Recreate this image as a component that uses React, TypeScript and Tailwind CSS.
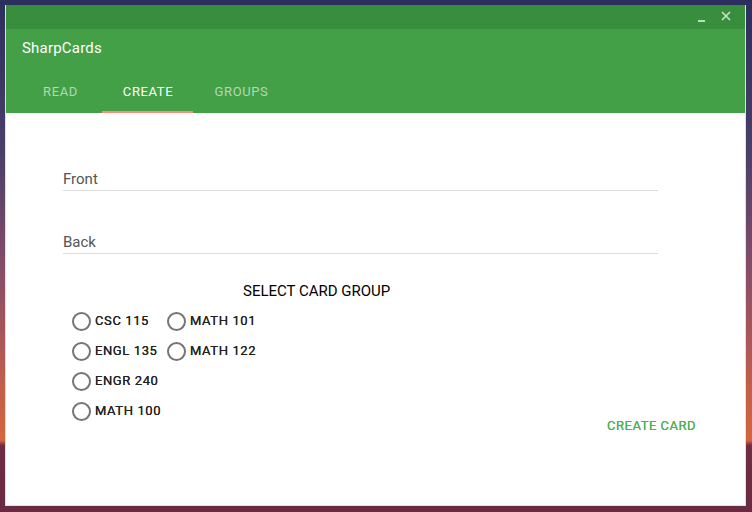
import React, { useState } from 'react';

const groups: string[][] = [
  ['CSC 115', 'ENGL 135', 'ENGR 240', 'MATH 100'],
  ['MATH 101', 'MATH 122'],
];

const tabs = [
  { name: 'READ', pad: 'pl-[8px]' },
  { name: 'CREATE', pad: 'pl-[1px]' },
  { name: 'GROUPS', pad: 'pl-[6px]' },
];

const Radio: React.FC<{ label: string; checked: boolean; onPick: () => void }> = ({ label, checked, onPick }) => (
  <label className="flex items-center h-[30px] cursor-pointer" onClick={onPick}>
    <span className="w-[19px] h-[19px] rounded-full border-2 border-[#757575] flex items-center justify-center">
      {checked && <span className="w-[9px] h-[9px] rounded-full bg-[#43a047]" />}
    </span>
    <span className="ml-[4px] text-[13px] font-normal tracking-[0.6px] text-[#222] [text-shadow:0_0_0.4px_#222]">{label}</span>
  </label>
);

export default function App() {
  const [tab, setTab] = useState(1);
  const [group, setGroup] = useState('');

  return (
    <div
      className="w-[752px] h-[512px] p-[5px] pr-[6px] pb-[6px] bg-[linear-gradient(180deg,#2c2f5e_0%,#4a3f6a_30%,#8c4f66_55%,#c25d4c_75%,#d4663d_86%,#6d2d44_87%,#6a2b42_100%)]"
      style={{ fontFamily: 'Roboto, "Liberation Sans", sans-serif' }}
    >
      <div className="w-full h-full flex flex-col bg-white border border-[#e0e0e0] border-t-0">
        {/* title bar */}
        <div className="h-[24px] bg-[#388e3c] flex items-center justify-end pr-[14px] gap-[16px] text-[#b9dfbb]">
          <span className="w-[7px] h-[2px] bg-[#b9dfbb] mt-[7px]" />
          <svg width="10" height="10" viewBox="0 0 10 10" className="mb-[3px]">
            <path d="M1 1 L9 9 M9 1 L1 9" stroke="#c8e6c9" strokeWidth="1.6" />
          </svg>
        </div>

        {/* app bar */}
        <div className="bg-[#43a047] h-[84px] flex flex-col">
          <div className="h-[38px] pl-[16px] flex items-center text-white text-[15px] font-normal tracking-[0.2px]">SharpCards</div>
          <div className="flex-1 flex items-end pl-[5px]">
            {tabs.map((t, i) => (
              <button
                key={t.name}
                onClick={() => setTab(i)}
                className={`w-[91px] h-[46px] flex items-center justify-center pt-[6px] ${t.pad} text-[13px] font-normal tracking-[0.6px] border-b-2 ${
                  tab === i ? 'text-white border-[#ff8a80]' : 'text-white/60 border-transparent'
                }`}
              >
                {t.name}
              </button>
            ))}
          </div>
        </div>

        {/* content */}
        <div className="flex-1 flex flex-col px-[57px] pt-[56px]">
          <div className="w-[595px] border-b border-[#dcdcdc] pb-[1px] text-[15px] text-[#555] leading-[20px]">Front</div>
          <div className="w-[595px] mt-[41px] border-b border-[#dcdcdc] pb-[1px] text-[15px] text-[#555] leading-[20px]">Back</div>

          <div className="mt-[29px] pl-[180px] text-[15px] text-black leading-[16px]">SELECT CARD GROUP</div>

          <div className="flex mt-[7px] pl-[9px] items-start">
            <div className="flex flex-col w-[95px]">
              {groups[0].map(g => (
                <Radio key={g} label={g} checked={group === g} onPick={() => setGroup(g)} />
              ))}
            </div>
            <div className="flex flex-col">
              {groups[1].map(g => (
                <Radio key={g} label={g} checked={group === g} onPick={() => setGroup(g)} />
              ))}
            </div>
            <div className="flex-1 flex justify-end self-end">
              <button className="mr-[-8px] mb-[-9px] text-[13px] font-normal tracking-[0.5px] text-[#4caf50] [text-shadow:0_0_0.4px_#4caf50]">CREATE CARD</button>
            </div>
          </div>
        </div>
      </div>
    </div>
  );
}
